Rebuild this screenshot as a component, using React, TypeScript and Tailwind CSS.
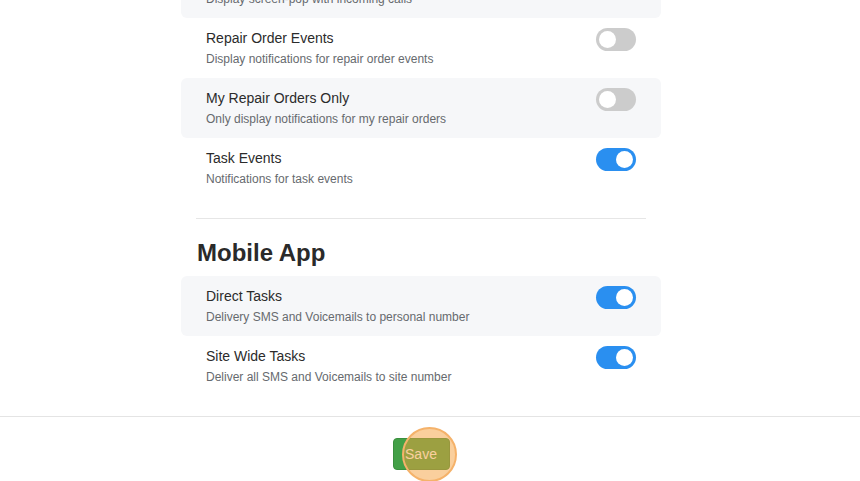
import React from 'react';

type Setting = { title: string; desc: string; on: boolean; shaded: boolean };

const desktop: Setting[] = [
  { title: 'Screen Pop', desc: 'Display screen-pop with incoming calls', on: true, shaded: true },
  { title: 'Repair Order Events', desc: 'Display notifications for repair order events', on: false, shaded: false },
  { title: 'My Repair Orders Only', desc: 'Only display notifications for my repair orders', on: false, shaded: true },
  { title: 'Task Events', desc: 'Notifications for task events', on: true, shaded: false },
];

const mobile: Setting[] = [
  { title: 'Direct Tasks', desc: 'Delivery SMS and Voicemails to personal number', on: true, shaded: true },
  { title: 'Site Wide Tasks', desc: 'Deliver all SMS and Voicemails to site number', on: true, shaded: false },
];

function Toggle({ on }: { on: boolean }) {
  return (
    <div
      className={`mt-[10px] w-[40px] h-[23px] rounded-full flex items-center px-[3px] shrink-0 ${
        on ? 'bg-[#2a8ff0] justify-end' : 'bg-[#cccccc] justify-start'
      }`}
    >
      <div className="w-[17px] h-[17px] rounded-full bg-white" />
    </div>
  );
}

function Row({ s }: { s: Setting }) {
  return (
    <div className={`h-[60px] flex justify-between pl-[25px] pr-[25px] rounded-[6px] ${s.shaded ? 'bg-[#f6f7f9]' : ''}`}>
      <div className="pt-[10px]">
        <div className="text-[14px] leading-[20px] text-[#2b2b2b]">{s.title}</div>
        <div className="text-[12px] leading-[18px] mt-[2px] text-[#666a6e]">{s.desc}</div>
      </div>
      <Toggle on={s.on} />
    </div>
  );
}

export default function App() {
  return (
    <div className="w-[860px] h-[481px] overflow-hidden bg-white" style={{ fontFamily: '"Liberation Sans", Arial, sans-serif' }}>
      <div className="w-[842px]">
        <div className="mx-auto w-[480px] -mt-[42px]">
          {desktop.map((s) => (
            <Row key={s.title} s={s} />
          ))}
          <div className="mt-[20px] mx-[15px] border-t border-[#e6e6e6]" />
          <h2 className="mt-[19px] mb-[8px] pl-[16px] text-[24px] leading-[30px] font-bold text-[#2a2a2a]">Mobile App</h2>
          {mobile.map((s) => (
            <Row key={s.title} s={s} />
          ))}
        </div>
      </div>
      <div className="mt-[20px] border-t border-[#e4e4e4]">
        <div className="w-[842px] flex justify-center pt-[21px]">
          <div className="relative">
            <button className="w-[57px] h-[32px] rounded-[4px] bg-[#43a047] border border-[#3a8f3e] text-white text-[14px]">
              Save
            </button>
            <div className="absolute left-[9px] top-[-11px] w-[55px] h-[55px] rounded-full bg-[#f5a03c]/50 border-2 border-[#f5b26a]" />
          </div>
        </div>
      </div>
    </div>
  );
}
